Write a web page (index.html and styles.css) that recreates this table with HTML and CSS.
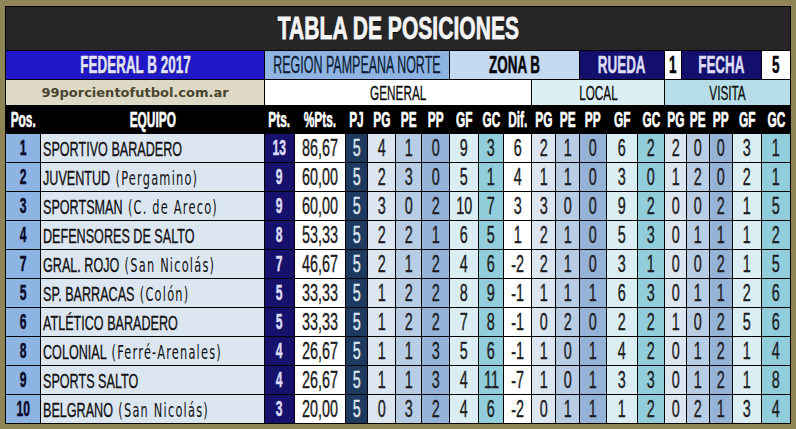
FILE: index.html
```html
<!DOCTYPE html>
<html lang="es">
<head>
<meta charset="utf-8">
<title>Tabla de posiciones</title>
<link rel="stylesheet" href="styles.css">
</head>
<body>
<div class="board">
  <div class="title"><span>TABLA DE POSICIONES</span></div>
  <div class="info">
    <div class="fed"><span>FEDERAL B 2017</span></div>
    <div class="reg"><span>REGION PAMPEANA NORTE</span></div>
    <div class="zona"><span>ZONA B</span></div>
    <div class="navy"><span>RUEDA</span></div>
    <div class="wh"><span>1</span></div>
    <div class="navy"><span>FECHA</span></div>
    <div class="wh"><span>5</span></div>
  </div>
  <div class="groups">
    <div class="site">99porcientofutbol.com.ar</div>
    <div class="gen"><span>GENERAL</span></div>
    <div class="loc"><span>LOCAL</span></div>
    <div class="vis"><span>VISITA</span></div>
  </div>
  <div class="grid head">
    <div><span>Pos.</span></div><div><span>EQUIPO</span></div><div><span>Pts.</span></div><div><span>%Pts.</span></div><div><span>PJ</span></div>
    <div><span>PG</span></div><div><span>PE</span></div><div><span>PP</span></div><div><span>GF</span></div><div><span>GC</span></div><div><span>Dif.</span></div>
    <div><span>PG</span></div><div><span>PE</span></div><div><span>PP</span></div><div><span>GF</span></div><div><span>GC</span></div>
    <div><span>PG</span></div><div><span>PE</span></div><div><span>PP</span></div><div><span>GF</span></div><div><span>GC</span></div>
  </div>

  <div class="grid row">
    <div class="pos"><span>1</span></div><div class="team"><span>SPORTIVO BARADERO</span></div><div class="pts"><span>13</span></div><div class="pct"><span>86,67</span></div><div class="pj"><span>5</span></div>
    <div class="g1"><span>4</span></div><div class="g2"><span>1</span></div><div class="g3"><span>0</span></div><div class="g4"><span>9</span></div><div class="g5"><span>3</span></div><div class="dif"><span>6</span></div>
    <div class="g1"><span>2</span></div><div class="g2"><span>1</span></div><div class="g3"><span>0</span></div><div class="g4"><span>6</span></div><div class="g5"><span>2</span></div>
    <div class="g1"><span>2</span></div><div class="g2"><span>0</span></div><div class="g3"><span>0</span></div><div class="g4"><span>3</span></div><div class="g5"><span>1</span></div>
  </div>
  <div class="grid row">
    <div class="pos"><span>2</span></div><div class="team"><span>JUVENTUD <em>(Pergamino)</em></span></div><div class="pts"><span>9</span></div><div class="pct"><span>60,00</span></div><div class="pj"><span>5</span></div>
    <div class="g1"><span>2</span></div><div class="g2"><span>3</span></div><div class="g3"><span>0</span></div><div class="g4"><span>5</span></div><div class="g5"><span>1</span></div><div class="dif"><span>4</span></div>
    <div class="g1"><span>1</span></div><div class="g2"><span>1</span></div><div class="g3"><span>0</span></div><div class="g4"><span>3</span></div><div class="g5"><span>0</span></div>
    <div class="g1"><span>1</span></div><div class="g2"><span>2</span></div><div class="g3"><span>0</span></div><div class="g4"><span>2</span></div><div class="g5"><span>1</span></div>
  </div>
  <div class="grid row">
    <div class="pos"><span>3</span></div><div class="team"><span>SPORTSMAN <em>(C. de Areco)</em></span></div><div class="pts"><span>9</span></div><div class="pct"><span>60,00</span></div><div class="pj"><span>5</span></div>
    <div class="g1"><span>3</span></div><div class="g2"><span>0</span></div><div class="g3"><span>2</span></div><div class="g4"><span>10</span></div><div class="g5"><span>7</span></div><div class="dif"><span>3</span></div>
    <div class="g1"><span>3</span></div><div class="g2"><span>0</span></div><div class="g3"><span>0</span></div><div class="g4"><span>9</span></div><div class="g5"><span>2</span></div>
    <div class="g1"><span>0</span></div><div class="g2"><span>0</span></div><div class="g3"><span>2</span></div><div class="g4"><span>1</span></div><div class="g5"><span>5</span></div>
  </div>
  <div class="grid row">
    <div class="pos"><span>4</span></div><div class="team"><span>DEFENSORES DE SALTO</span></div><div class="pts"><span>8</span></div><div class="pct"><span>53,33</span></div><div class="pj"><span>5</span></div>
    <div class="g1"><span>2</span></div><div class="g2"><span>2</span></div><div class="g3"><span>1</span></div><div class="g4"><span>6</span></div><div class="g5"><span>5</span></div><div class="dif"><span>1</span></div>
    <div class="g1"><span>2</span></div><div class="g2"><span>1</span></div><div class="g3"><span>0</span></div><div class="g4"><span>5</span></div><div class="g5"><span>3</span></div>
    <div class="g1"><span>0</span></div><div class="g2"><span>1</span></div><div class="g3"><span>1</span></div><div class="g4"><span>1</span></div><div class="g5"><span>2</span></div>
  </div>
  <div class="grid row">
    <div class="pos"><span>7</span></div><div class="team"><span>GRAL. ROJO <em>(San Nicolás)</em></span></div><div class="pts"><span>7</span></div><div class="pct"><span>46,67</span></div><div class="pj"><span>5</span></div>
    <div class="g1"><span>2</span></div><div class="g2"><span>1</span></div><div class="g3"><span>2</span></div><div class="g4"><span>4</span></div><div class="g5"><span>6</span></div><div class="dif"><span>-2</span></div>
    <div class="g1"><span>2</span></div><div class="g2"><span>1</span></div><div class="g3"><span>0</span></div><div class="g4"><span>3</span></div><div class="g5"><span>1</span></div>
    <div class="g1"><span>0</span></div><div class="g2"><span>0</span></div><div class="g3"><span>2</span></div><div class="g4"><span>1</span></div><div class="g5"><span>5</span></div>
  </div>
  <div class="grid row">
    <div class="pos"><span>5</span></div><div class="team"><span>SP. BARRACAS <em>(Colón)</em></span></div><div class="pts"><span>5</span></div><div class="pct"><span>33,33</span></div><div class="pj"><span>5</span></div>
    <div class="g1"><span>1</span></div><div class="g2"><span>2</span></div><div class="g3"><span>2</span></div><div class="g4"><span>8</span></div><div class="g5"><span>9</span></div><div class="dif"><span>-1</span></div>
    <div class="g1"><span>1</span></div><div class="g2"><span>1</span></div><div class="g3"><span>1</span></div><div class="g4"><span>6</span></div><div class="g5"><span>3</span></div>
    <div class="g1"><span>0</span></div><div class="g2"><span>1</span></div><div class="g3"><span>1</span></div><div class="g4"><span>2</span></div><div class="g5"><span>6</span></div>
  </div>
  <div class="grid row">
    <div class="pos"><span>6</span></div><div class="team"><span>ATLÉTICO BARADERO</span></div><div class="pts"><span>5</span></div><div class="pct"><span>33,33</span></div><div class="pj"><span>5</span></div>
    <div class="g1"><span>1</span></div><div class="g2"><span>2</span></div><div class="g3"><span>2</span></div><div class="g4"><span>7</span></div><div class="g5"><span>8</span></div><div class="dif"><span>-1</span></div>
    <div class="g1"><span>0</span></div><div class="g2"><span>2</span></div><div class="g3"><span>0</span></div><div class="g4"><span>2</span></div><div class="g5"><span>2</span></div>
    <div class="g1"><span>1</span></div><div class="g2"><span>0</span></div><div class="g3"><span>2</span></div><div class="g4"><span>5</span></div><div class="g5"><span>6</span></div>
  </div>
  <div class="grid row">
    <div class="pos"><span>8</span></div><div class="team"><span>COLONIAL <em>(Ferré-Arenales)</em></span></div><div class="pts"><span>4</span></div><div class="pct"><span>26,67</span></div><div class="pj"><span>5</span></div>
    <div class="g1"><span>1</span></div><div class="g2"><span>1</span></div><div class="g3"><span>3</span></div><div class="g4"><span>5</span></div><div class="g5"><span>6</span></div><div class="dif"><span>-1</span></div>
    <div class="g1"><span>1</span></div><div class="g2"><span>0</span></div><div class="g3"><span>1</span></div><div class="g4"><span>4</span></div><div class="g5"><span>2</span></div>
    <div class="g1"><span>0</span></div><div class="g2"><span>1</span></div><div class="g3"><span>2</span></div><div class="g4"><span>1</span></div><div class="g5"><span>4</span></div>
  </div>
  <div class="grid row">
    <div class="pos"><span>9</span></div><div class="team"><span>SPORTS SALTO</span></div><div class="pts"><span>4</span></div><div class="pct"><span>26,67</span></div><div class="pj"><span>5</span></div>
    <div class="g1"><span>1</span></div><div class="g2"><span>1</span></div><div class="g3"><span>3</span></div><div class="g4"><span>4</span></div><div class="g5"><span>11</span></div><div class="dif"><span>-7</span></div>
    <div class="g1"><span>1</span></div><div class="g2"><span>0</span></div><div class="g3"><span>1</span></div><div class="g4"><span>3</span></div><div class="g5"><span>3</span></div>
    <div class="g1"><span>0</span></div><div class="g2"><span>1</span></div><div class="g3"><span>2</span></div><div class="g4"><span>1</span></div><div class="g5"><span>8</span></div>
  </div>
  <div class="grid row">
    <div class="pos"><span>10</span></div><div class="team"><span>BELGRANO <em>(San Nicolás)</em></span></div><div class="pts"><span>3</span></div><div class="pct"><span>20,00</span></div><div class="pj"><span>5</span></div>
    <div class="g1"><span>0</span></div><div class="g2"><span>3</span></div><div class="g3"><span>2</span></div><div class="g4"><span>4</span></div><div class="g5"><span>6</span></div><div class="dif"><span>-2</span></div>
    <div class="g1"><span>0</span></div><div class="g2"><span>1</span></div><div class="g3"><span>1</span></div><div class="g4"><span>1</span></div><div class="g5"><span>2</span></div>
    <div class="g1"><span>0</span></div><div class="g2"><span>2</span></div><div class="g3"><span>1</span></div><div class="g4"><span>3</span></div><div class="g5"><span>4</span></div>
  </div>
</div>
</body>
</html>
```

FILE: styles.css
```css
* { box-sizing: border-box; margin: 0; padding: 0; }

html, body { background: #8e8456; }

body {
  width: 796px;
  height: 429px;
  overflow: hidden;
  padding: 6px 0 0 5px;
  font-family: "Liberation Sans", Arial, sans-serif;
}

.board {
  width: 786px;
  border: 1px solid #000;
  background: #000;
  display: flex;
  flex-direction: column;
  gap: 1px;
}

.board span {
  display: inline-block;
  white-space: nowrap;
  line-height: 1;
}

/* title */
.title {
  height: 43px;
  background: #262626;
  display: flex;
  align-items: center;
  justify-content: center;
}
.title span {
  color: #f4f4f4;
  font-weight: 700;
  font-size: 31px;
  transform: scaleX(.68);
  -webkit-text-stroke: .8px #f4f4f4;
  text-shadow: 1px 1px 0 #000;
}

/* info row */
.info {
  height: 28px;
  display: grid;
  grid-template-columns: 258px 184px 129px 84px 16px 79px 28px;
  gap: 1px;
}
.groups {
  height: 25px;
  display: grid;
  grid-template-columns: 258px 266px 132px 125px;
  gap: 1px;
}
.grid {
  display: grid;
  grid-template-columns: 34px 223px 29px 50px 21px 27px 25px 27px 28px 24px 27px 23px 23px 26px 30px 26px 21px 22px 22px 28px 28px;
  gap: 1px;
}
.info > div, .groups > div, .grid > div {
  display: flex;
  align-items: center;
  justify-content: center;
  min-width: 0;
}

.info span {
  font-size: 24px;
  font-weight: 700;
  transform: scaleX(.56);
  -webkit-text-stroke: .5px currentColor;
}
.fed { background: #2018c6; }
.fed span { color: #e2e2ff; text-shadow: 1px 1px 0 #0a0850; }
.reg { background: #8db4e2; }
.reg span { font-weight: 400; color: #0c1a33; transform: scaleX(.52); -webkit-text-stroke: .3px currentColor; }
.zona { background: #c5d9f1; }
.zona span { color: #050505; }
.navy { background: #130f6c; }
.navy span { color: #dcdcf6; }
.wh { background: #fff; }
.wh span { color: #050505; }

/* groups row */
.site {
  background: #ddd9c4;
  color: #4a4530;
  font-family: "DejaVu Sans", sans-serif;
  font-weight: 700;
  font-size: 13px;
}
.groups span {
  font-size: 21px;
  color: #0a0a0a;
  transform: scaleX(.56);
  -webkit-text-stroke: .3px currentColor;
}
.gen { background: #fff; }
.loc { background: #daeef3; }
.vis { background: #b7dee8; }

/* header */
.head { height: 27px; background: #000; }
.head span {
  color: #fff;
  font-size: 22px;
  font-weight: 700;
  transform: scaleX(.54);
  -webkit-text-stroke: .6px #fff;
}

/* data rows */
.row { height: 28px; }
.row span {
  font-size: 24px;
  font-weight: 400;
  color: #1c1c22;
  transform: scaleX(.6);
  -webkit-text-stroke: .4px currentColor;
}
.pos { background: #8db4e2; }
.row .pos span { font-size: 22px; font-weight: 700; color: #0a0a2a; transform: scaleX(.55); -webkit-text-stroke: .5px currentColor; }
.team { background: #dce6f1; justify-content: flex-start !important; padding-left: 2px; }
.row .team span {
  font-size: 21px;
  color: #111;
  transform: scaleX(.6);
  transform-origin: 0 50%;
  -webkit-text-stroke: .35px currentColor;
}
.team em {
  font-style: normal;
  font-family: "DejaVu Sans", sans-serif;
  font-size: 19px;
  letter-spacing: 2px;
  margin-left: 3px;
  -webkit-text-stroke: 0;
}
.pts { background: #16116a; }
.row .pts span { font-size: 22px; font-weight: 700; color: #dcdcf6; transform: scaleX(.55); -webkit-text-stroke: .5px currentColor; }
.pct { background: #fff; }
.pj { background: #1f3a60; }
.row .pj span { color: #dce6f1; }
.g1 { background: #dce6f1; }
.g2 { background: #b8cce4; }
.g3 { background: #95b3d7; }
.g4 { background: #daeef3; }
.g5 { background: #92cddc; }
.dif { background: #fff; }
```
